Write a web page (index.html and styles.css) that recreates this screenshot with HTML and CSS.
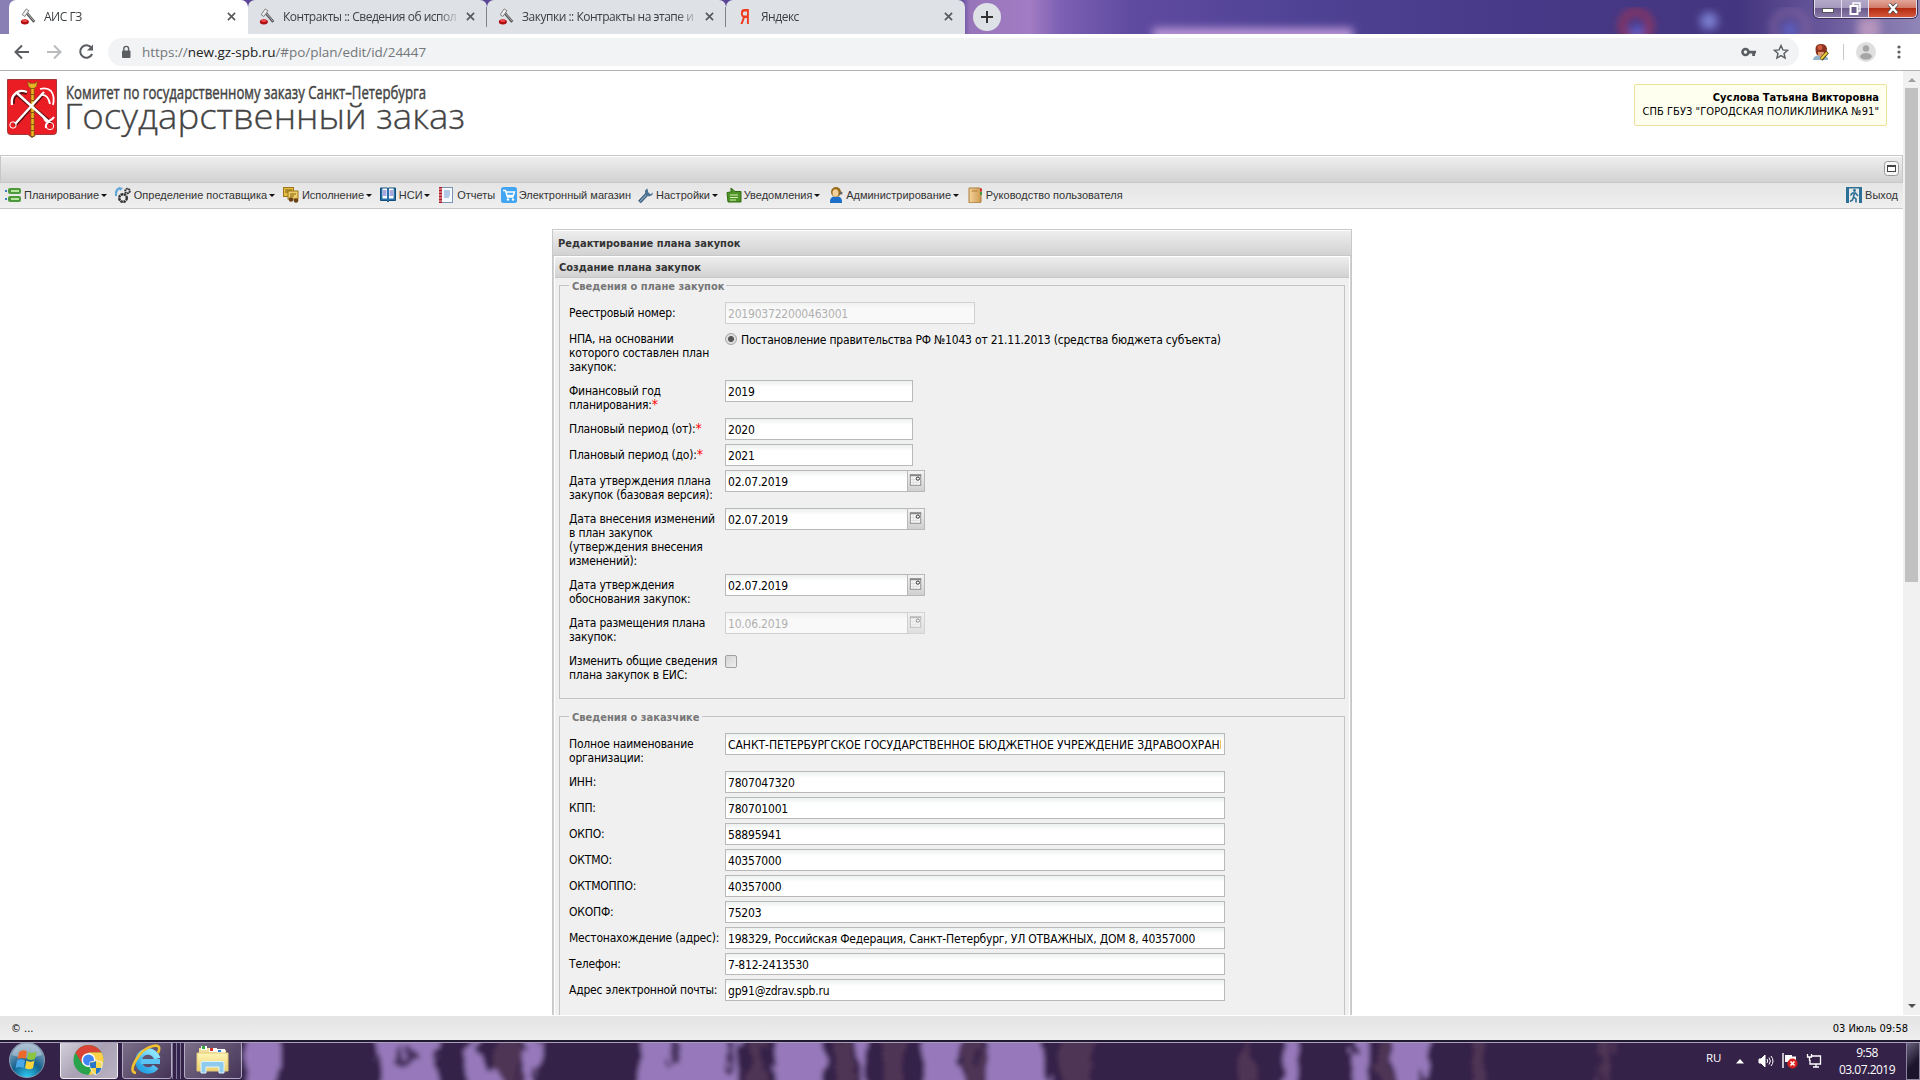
FILE: index.html
```html
<!DOCTYPE html>
<html lang="ru">
<head>
  <meta charset="utf-8">
  <title>АИС ГЗ</title>
  <link rel="stylesheet" href="styles.css">
</head>
<body>
  <svg width="0" height="0" class="defs">
    <defs>
      <linearGradient id="gDoc" x1="0" y1="0" x2="1" y2="0"><stop offset="0" stop-color="#f5d39a"/><stop offset="1" stop-color="#cf9a52"/></linearGradient>
      <radialGradient id="gOrb" cx=".5" cy="1" r=".9"><stop offset="0" stop-color="#2fd0f5"/><stop offset=".5" stop-color="#12618f"/><stop offset="1" stop-color="#8aa6bd"/></radialGradient>
      <linearGradient id="gFolder" x1="0" y1="0" x2="0" y2="1"><stop offset="0" stop-color="#fff6b8"/><stop offset="1" stop-color="#ecd06a"/></linearGradient>
      <linearGradient id="gIe" x1="0" y1="0" x2="0" y2="1"><stop offset="0" stop-color="#8be4ff"/><stop offset="1" stop-color="#27a5e6"/></linearGradient>
      <filter id="soft"><feGaussianBlur stdDeviation="4"/></filter>
      <filter id="bark">
        <feTurbulence type="fractalNoise" baseFrequency=".08 .03" numOctaves="3" seed="4" result="n"/>
        <feDisplacementMap in="SourceGraphic" in2="n" scale="26" xChannelSelector="R" yChannelSelector="G"/>
        <feGaussianBlur stdDeviation="2.800"/>
      </filter>
      <symbol id="hammer" viewBox="0 0 16 19">
        <path d="M6 5l9 10.500" stroke="#555" stroke-width="3"/>
        <path d="M6.500 5l8 9.500" stroke="#bbb" stroke-width="1"/>
        <path d="M1.500 7.500L6 1l3 2-4.500 6.500z" fill="#eee" stroke="#777"/>
        <ellipse cx="4.500" cy="15.500" rx="4.500" ry="3" fill="#b00f14"/>
        <ellipse cx="4.500" cy="14.200" rx="3" ry="1.400" fill="#f04a4a"/>
      </symbol>
      <symbol id="cal" viewBox="0 0 17 20">
        <rect x="2.500" y="3.500" width="11" height="11" fill="#fbfbfb" stroke="#888"/>
        <path d="M2 4h12" stroke="#888" stroke-width="2"/>
        <path d="M5.500 6v8M8.500 6v8M3 8.500h10M3 11.500h10" stroke="#ddd"/>
        <circle cx="10.500" cy="7.500" r="1.700" fill="#fff" stroke="#222"/>
      </symbol>
    </defs>
  </svg>

  <!-- browser tabs -->
  <div class="tabstrip">
    <svg class="glass" width="1920" height="34">
      <g filter="url(#soft)">
        <rect x="1153" y="28" width="200" height="14" fill="#b894d6"/>
        <circle cx="1636" cy="26" r="14" fill="none" stroke="#93345f" stroke-width="7"/>
        <circle cx="1637" cy="32" r="7" fill="#5a5cc4"/>
        <circle cx="1709" cy="21" r="9" fill="#7a7ed0"/>
        <circle cx="1790" cy="28" r="17" fill="none" stroke="#8a68a6" stroke-width="4"/>
        <circle cx="1790" cy="30" r="8" fill="#5d5fc0"/>
        <rect x="1858" y="18" width="22" height="22" fill="#b695bd"/>
      </g>
    </svg>
    <div class="tab active">
      <svg class="fav"><use href="#hammer"/></svg><span class="tab-title">АИС ГЗ</span>
      <svg class="tab-x" viewBox="0 0 10 10"><path d="M1 1l8 8M9 1L1 9"/></svg>
    </div>
    <div class="tab">
      <svg class="fav"><use href="#hammer"/></svg><span class="tab-title">Контракты :: Сведения об испол</span>
      <svg class="tab-x" viewBox="0 0 10 10"><path d="M1 1l8 8M9 1L1 9"/></svg>
    </div>
    <div class="tab sep">
      <svg class="fav"><use href="#hammer"/></svg><span class="tab-title">Закупки :: Контракты на этапе и</span>
      <svg class="tab-x" viewBox="0 0 10 10"><path d="M1 1l8 8M9 1L1 9"/></svg>
    </div>
    <div class="tab sep last">
      <span class="fav ya">Я</span><span class="tab-title">Яндекс</span>
      <svg class="tab-x" viewBox="0 0 10 10"><path d="M1 1l8 8M9 1L1 9"/></svg>
    </div>
    <svg class="newtab" width="28" height="28"><circle cx="14" cy="14" r="14" fill="#dee1e6"/><path d="M14 8v12M8 14h12" stroke="#333" stroke-width="2"/></svg>
    <div class="winbtns">
      <span class="wb"><svg width="12" height="12"><rect x=".5" y="5.500" width="11" height="4" fill="#fff" stroke="#555"/></svg></span>
      <span class="wb"><svg width="12" height="14"><rect x="4" y="1" width="7" height="8" fill="none" stroke="#fff" stroke-width="1.500"/><rect x="1.500" y="4" width="7" height="8" fill="#6b5a8c" stroke="#fff" stroke-width="2"/></svg></span>
      <span class="wb wclose"><svg width="12" height="12"><path d="M2 1l8 9M10 1l-8 9" stroke="#444" stroke-width="4"/><path d="M2 1l8 9M10 1l-8 9" stroke="#fff" stroke-width="2.500"/></svg></span>
    </div>
  </div>

  <!-- address bar -->
  <div class="toolbar">
    <svg class="nav" width="100" height="36" fill="none" stroke-width="2">
      <path d="M21 18H8M14 11.500L7.500 18l6.500 6.500" stroke="#5a5d61"/>
      <path d="M39 18h13M46 11.500l6.500 6.500-6.500 6.500" stroke="#b9bbbd"/>
      <path d="M83.500 14a6.200 6.200 0 1 0 .6 6" stroke="#5a5d61"/><path d="M85 10.500v6h-6z" fill="#5a5d61"/>
    </svg>
    <div class="omnibox">
      <svg width="10" height="14"><rect x="1" y="5.500" width="8.500" height="7.500" rx="1" fill="#5a5d61"/><path d="M2.800 6V3.800a2.400 2.400 0 0 1 4.800 0V6" fill="none" stroke="#5a5d61" stroke-width="1.400"/></svg>
      <span class="url"><i>https://</i>new.gz-spb.ru<i>/#po/plan/edit/id/24447</i></span>
      <svg class="key" width="16" height="10"><circle cx="4.500" cy="5" r="3" fill="none" stroke="#5a5d61" stroke-width="2.600"/><path d="M8 3.800h7v2.600h-1v2.600h-2.800V6.400H8z" fill="#5a5d61"/></svg>
      <svg class="star" width="16" height="16"><path d="M8 1.500l1.900 4.400 4.700.4-3.600 3.100 1.100 4.700L8 11.600l-4.100 2.500L5 9.400 1.400 6.300l4.700-.4z" fill="none" stroke="#5a5d61" stroke-width="1.400"/></svg>
    </div>
    <svg class="ext" width="16" height="17"><path d="M0 16l1-3 4-2h6l4 3v2z" fill="#93b2cc"/><path d="M2.500 5q0-5 5.500-5t6 5q0 4-2 6H4Q2.500 9 2.500 5z" fill="#8b3222"/><circle cx="7" cy="3.500" r="2.500" fill="#cf5b3c"/><path d="M5 8h6v3l-3 2-3-2z" fill="#e09a6c"/><path d="M14.500 8L8 15.500" stroke="#4b3b10" stroke-width="3.600"/><path d="M14 8.500L8 15" stroke="#f3d13d" stroke-width="2"/></svg>
    <span class="vline"></span>
    <svg class="avatar" width="20" height="20"><circle cx="10" cy="10" r="10" fill="#dfdfdf"/><circle cx="10" cy="6.500" r="3.200" fill="#a6a6a6"/><ellipse cx="10" cy="14.300" rx="5.800" ry="3.300" fill="#a6a6a6"/></svg>
    <svg class="dots" width="4" height="16" fill="#5a5d61"><circle cx="2" cy="3" r="1.600"/><circle cx="2" cy="8" r="1.600"/><circle cx="2" cy="13" r="1.600"/></svg>
  </div>

  <div class="viewport">
    <div class="page">
      <header class="head">
        <svg class="logo" width="480" height="66">
          <path d="M0.500 .5h49v52q0 3-3 3H29l-4 3-4-3H3.500q-3 0-3-3z" fill="#ea1c24" stroke="#9c3a3a"/>
          <g fill="none" stroke="#5c0d10" stroke-width="4">
            <path d="M8 46L37 14M6 25q-1-6 3-9 4-5 11-2M44 44L10 15"/>
          </g>
          <path d="M25.500 5v53" stroke="#7a5a12" stroke-width="4"/>
          <path d="M25.500 4v53" stroke="#f3b61f" stroke-width="2.400" stroke-dasharray="5 1"/>
          <path d="M20.500 2.500l3 2h4l3-2-1 5-2.500 2h-3l-2.500-2z" fill="#e6b322" stroke="#6b4a10" stroke-width=".6"/>
          <g fill="none" stroke="#fff" stroke-width="2.400">
            <path d="M8 45L37 13M42 43L10 14"/>
            <path d="M5 26q-1-8 3-11 4-5 12-2"/>
            <path d="M33 10q7-2 11 2 4 5 2 14M34 16q7-1 9 9" stroke-width="1.800"/>
            <circle cx="6" cy="46" r="3.200" stroke-width="1"/>
            <path d="M37 38q1 6 5 4t5-4M42 42q-4 3-3 7" stroke-width="2"/>
            <circle cx="43" cy="47" r="3.700" stroke-width="1"/>
          </g>
          <text class="logo-small" x="59" y="20" textLength="360" lengthAdjust="spacingAndGlyphs">Комитет по государственному заказу Санкт–Петербурга</text>
          <text class="logo-big" x="57" y="50" textLength="401" lengthAdjust="spacingAndGlyphs">Государственный заказ</text>
        </svg>
        <div class="user">
          <b>Суслова Татьяна Викторовна</b>
          <span>СПБ ГБУЗ "ГОРОДСКАЯ ПОЛИКЛИНИКА №91"</span>
        </div>
      </header>

      <div class="collapse-bar"><svg width="15" height="15"><rect x=".5" y=".5" width="14" height="14" rx="3" fill="#f6f6f6" stroke="#999"/><rect x="3.500" y="4.500" width="8" height="6" fill="#fff" stroke="#444"/><path d="M3 5h9" stroke="#444" stroke-width="2"/></svg></div>

      <nav class="menu">
        <a class="arr"><svg viewBox="0 0 16 16"><path d="M0 3h2v2H0zM0 11h2v2H0z" fill="#3a7fc0"/><rect x="3" y="1" width="13" height="6" rx="2" fill="#4c9a3c"/><rect x="3" y="9" width="13" height="6" rx="2" fill="#4c9a3c"/><path d="M6 4h8M6 12h8" stroke="#b6e69e" stroke-width="2"/></svg><span>Планирование</span></a>
        <a class="arr"><svg viewBox="0 0 16 16" fill="none"><path d="M1 9q-1-6 4-8" stroke="#5fa7d6" stroke-width="2.400"/><path d="M4 0l4 1-3 3z" fill="#5fa7d6"/><circle cx="8" cy="11" r="3.800" stroke="#333" stroke-width="2.400" stroke-dasharray="2.500 .5"/><circle cx="12.500" cy="4" r="2.300" stroke="#333" stroke-width="2" stroke-dasharray="1.600 .5"/></svg><span>Определение поставщика</span></a>
        <a class="arr"><svg viewBox="0 0 16 16"><rect x="0.500" y="0.500" width="10" height="9" fill="#e5bd45" stroke="#9b7717"/><rect x="5" y="4" width="10" height="8" fill="#efcf68" stroke="#9b7717"/><path d="M2 3h7M2 5h3M7 7h6M7 9h4" stroke="#806010"/><circle cx="8" cy="12.500" r="2.300" fill="#6b4317"/><circle cx="13" cy="13.500" r="2.300" fill="#6b4317"/></svg><span>Исполнение</span></a>
        <a class="arr"><svg viewBox="0 0 16 16"><path d="M.5 1h7l.5 1 .5-1h7v12.500H9l-1 1.500-1-1.500H.5z" fill="#2a70a8" stroke="#124a78"/><rect x="2.500" y="1.500" width="4.500" height="10" fill="#fff"/><rect x="9" y="1.500" width="4.500" height="10" fill="#fff"/><path d="M3 4h3.500M3 6h3.500M3 8h3.500M9.500 4H13M9.500 6H13M9.500 8H13" stroke="#5b4fc0"/></svg><span>НСИ</span></a>
        <a><svg viewBox="0 0 16 16"><rect x="3" y=".5" width="11.500" height="15" fill="#f6faff" stroke="#7a93b5"/><path d="M6 4h6M6 6h6M6 8h6M6 10h5" stroke="#6d9ad0"/><rect x="1" y="0" width="3" height="16" fill="#b31e2b"/><path d="M0 2h4M0 5h4M0 8h4M0 11h4M0 14h4" stroke="#fff" stroke-width=".7"/></svg><span>Отчеты</span></a>
        <a class="shop"><svg viewBox="0 0 16 16"><rect width="16" height="16" rx="2.500" fill="#41a5f2"/><path d="M2 3.500h2.500l2 6.500h6M5 5h8.500l-1.200 3.500H6" fill="none" stroke="#fff" stroke-width="1.500"/><circle cx="7" cy="12.500" r="1.200" fill="#fff"/><circle cx="12" cy="12.500" r="1.200" fill="#fff"/></svg><span>Электронный магазин</span></a>
        <a class="arr tight"><svg viewBox="0 0 16 16"><path d="M1.500 15L10 6" stroke="#2e4f6c" stroke-width="3.600"/><path d="M2 14.500L10 6" stroke="#7fa0bd" stroke-width="1.800"/><path d="M9.500 1.500A4 4 0 1 0 15 5.500l-2.500 1.700-2.300-1.900z" fill="#4d7291"/></svg><span>Настройки</span></a>
        <a class="arr tight"><svg viewBox="0 0 16 16"><path d="M1 5.500L5 5V1l4 3.500h6V15H2z" fill="#4f9427" stroke="#326b12"/><path d="M4 8h8M4 10.500h8M4 13h6" stroke="#d8f0b8"/></svg><span>Уведомления</span></a>
        <a class="arr tight"><svg viewBox="0 0 16 16"><path d="M2 16q-.5-6 4-6.500h4q4.500.5 4 6.500z" fill="#1e6fc9"/><circle cx="8" cy="5" r="5" fill="#9b6a1a"/><ellipse cx="7.500" cy="6" rx="3" ry="3.800" fill="#f2cf9b"/><circle cx="13" cy="6" r="1.500" fill="#666"/></svg><span>Администрирование</span></a>
        <a class="tight guide"><svg viewBox="0 0 16 16"><path d="M1 1h11l1 1v13l-1 .8H1z" fill="url(#gDoc)" stroke="#a97c3d"/><path d="M3.500 3.500h6v1h-6z" fill="#b27d34"/><path d="M12 1.500h2v3h-2z" fill="#c33"/><path d="M12 5h2v3h-2z" fill="#4a9a3a"/></svg><span>Руководство пользователя</span></a>
        <a class="exit"><svg viewBox="0 0 16 16"><path d="M0 0h16v16h-3V1.500H3V16H0z" fill="#2c7096"/><circle cx="8.500" cy="3.500" r="1.400" fill="#2c7096"/><path d="M4.500 8.500l2-2.500h3l2.500 3M8.500 6L7.500 10l2.500 2v3.500M7.500 10l-1 3-2.500 1.500" fill="none" stroke="#2c7096" stroke-width="1.600"/></svg><span>Выход</span></a>
      </nav>

      <main>
        <div class="panel">
          <div class="panel-head">Редактирование плана закупок</div>
          <div class="inner">
            <div class="inner-head">Создание плана закупок</div>
            <form>
              <fieldset>
                <legend>Сведения о плане закупок</legend>
                <div class="row"><label>Реестровый номер:</label><input class="w250" value="201903722000463001" disabled></div>
                <div class="row"><label>НПА, на основании<br>которого составлен план<br>закупок:</label><span class="radio"></span><span class="radio-text">Постановление правительства РФ №1043 от 21.11.2013 (средства бюджета субъекта)</span></div>
                <div class="row"><label>Финансовый год<br>планирования:<em>*</em></label><input class="w188" value="2019"></div>
                <div class="row"><label>Плановый период (от):<em>*</em></label><input class="w188" value="2020"></div>
                <div class="row"><label>Плановый период (до):<em>*</em></label><input class="w188" value="2021"></div>
                <div class="row"><label>Дата утверждения плана<br>закупок (базовая версия):</label><input class="date" value="02.07.2019"><svg class="trigger"><use href="#cal"/></svg></div>
                <div class="row"><label>Дата внесения изменений<br>в план закупок<br>(утверждения внесения<br>изменений):</label><input class="date" value="02.07.2019"><svg class="trigger"><use href="#cal"/></svg></div>
                <div class="row"><label>Дата утверждения<br>обоснования закупок:</label><input class="date" value="02.07.2019"><svg class="trigger"><use href="#cal"/></svg></div>
                <div class="row"><label>Дата размещения плана<br>закупок:</label><input class="date" value="10.06.2019" disabled><svg class="trigger off"><use href="#cal"/></svg></div>
                <div class="row"><label>Изменить общие сведения<br>плана закупок в ЕИС:</label><span class="check"></span></div>
              </fieldset>
              <fieldset>
                <legend>Сведения о заказчике</legend>
                <div class="row"><label>Полное наименование<br>организации:</label><input class="w500 caps" value="САНКТ-ПЕТЕРБУРГСКОЕ ГОСУДАРСТВЕННОЕ БЮДЖЕТНОЕ УЧРЕЖДЕНИЕ ЗДРАВООХРАНЕНИЯ"></div>
                <div class="row"><label>ИНН:</label><input class="w500" value="7807047320"></div>
                <div class="row"><label>КПП:</label><input class="w500" value="780701001"></div>
                <div class="row"><label>ОКПО:</label><input class="w500" value="58895941"></div>
                <div class="row"><label>ОКТМО:</label><input class="w500" value="40357000"></div>
                <div class="row"><label>ОКТМОППО:</label><input class="w500" value="40357000"></div>
                <div class="row"><label>ОКОПФ:</label><input class="w500" value="75203"></div>
                <div class="row"><label>Местонахождение (адрес):</label><input class="w500" value="198329, Российская Федерация, Санкт-Петербург, УЛ ОТВАЖНЫХ, ДОМ 8, 40357000"></div>
                <div class="row"><label>Телефон:</label><input class="w500" value="7-812-2413530"></div>
                <div class="row"><label>Адрес электронной почты:</label><input class="w500" value="gp91@zdrav.spb.ru"></div>
              </fieldset>
            </form>
          </div>
        </div>
      </main>
    </div>
    <div class="scroll"><i class="up"></i><i class="thumb"></i><i class="down"></i></div>
  </div>

  <footer class="status"><span>© ...</span><span class="stamp">03 Июль 09:58</span></footer>

  <!-- windows taskbar -->
  <div class="taskbar">
    <svg class="trees" width="1920" height="40">
      <rect width="1920" height="40" fill="#35234a"/>
      <g filter="url(#bark)">
        <rect x="-10" y="-10" width="1940" height="60" fill="#35234a"/>
        <g fill="#9779bb">
          <path d="M246-20h32v80h-32zM378-20h60v80h-60zM470-20h10v45l20 10v25h-30zM524-20h12v80h-12zM640-20h98v80h-98zM775-20h46v80h-46zM860-20h8v80h-8zM925-20h38v80h-38zM985-20h56l10 80h-66zM1284-20h12v80h-12zM1354-20h14v80h-14zM1394-20h32v80h-32z"/>
        </g>
        <g fill="#573a58">
          <path d="M500-10h20v70h-20zM748-10h18v70h-18zM835-10h20v70h-20zM880-10h26v70h-26zM968-10h12v70h-12zM1060-10h34v70h-34zM1376-10h14v70h-14zM1472-10h12v70h-12zM1600-10h10v70h-10zM1240-10h12v70h-12z" opacity=".8"/>
        </g>
        <path d="M404 2l12 20h-20zM670-10h10v35h-10zM725-10h8v40h-8z" fill="#46305f"/>
      </g>
    </svg>
    <svg class="orb" width="40" height="40"><circle cx="20" cy="20" r="17.500" fill="url(#gOrb)" stroke="#8c9cb0"/><path d="M5 15a15.500 15.500 0 0 1 30 0q-15 6-30 0z" fill="#c9d6e2" opacity=".5"/><path d="M12 12q4-3 8-.5L18.500 19q-4-2-8 0z" fill="#ee6a2c"/><path d="M21.500 12q4 2 8-.5L28 19q-4 2-8 0z" fill="#8cc63f"/><path d="M10 20.500q4-2.500 8 0L16.500 28q-4-2-8 0z" fill="#4aa7e8"/><path d="M19.500 20.500q4 2.500 8 0L26 28q-4 2.500-8 0z" fill="#fbd23a"/></svg>
    <span class="task on"><svg width="32" height="32"><circle cx="15.500" cy="16" r="15" fill="#2ba24c"/><path d="M2.500 8.500A15 15 0 0 1 28.500 8.500H15.500L9 19.500z" fill="#da4437"/><path d="M28.500 8.500a15 15 0 0 1-13 22.500l6.500-11.500-6.500-11z" fill="#fdd04a"/><circle cx="15.500" cy="16" r="7" fill="#fff"/><circle cx="15.500" cy="16" r="5.500" fill="#4285f4"/><path d="M17 18q4 0 6-2 2 2 6 2 1 9-6 13-7-4-6-13z" fill="#f8d94a" stroke="#eee"/><path d="M23 17v7h-5.500q-.6-2.500-.5-5.500 4 0 6-1.500zM23 24h5.500q-1 4-5.500 6.500z" fill="#2874c8"/></svg></span>
    <span class="task ie"><svg width="32" height="32"><circle cx="17" cy="17" r="9.500" fill="none" stroke="url(#gIe)" stroke-width="6.500" stroke-dasharray="51 8.700" transform="rotate(36 17 17)"/><path d="M10 17.500h19" stroke="#5cc4f2" stroke-width="5"/><path d="M5 29Q-2 28 5 16T22 2q9-2 5 7" fill="none" stroke="#f2c12e" stroke-width="2.600"/></svg></span>
    <span class="stack"></span>
    <span class="task files"><svg width="34" height="30"><path d="M3 3h11l2 2h14v20H3z" fill="#f3e19a"/><path d="M5 1h6v4H5z" fill="#fff"/><path d="M6 1h3v3H6z" fill="#2fae3a"/><path d="M13 3h8v4h-8z" fill="#fff"/><path d="M14 3h3v3h-3z" fill="#d93025"/><path d="M21 4h8v4h-8z" fill="#fff"/><path d="M22 5h3v2h-3z" fill="#2b7de0"/><path d="M1 8h31v18H1z" fill="url(#gFolder)" stroke="#e3c978"/><path d="M5 28V18q0-1.500 2-1.500h19q2 0 2 1.500v10h-5v-6H10v6z" fill="#8ecbed" stroke="#dff3ff"/></svg></span>
    <div class="tray">
      <span class="lang">RU</span>
      <svg class="t-up" width="8" height="5"><path d="M0 4.500L4 0l4 4.500z" fill="#fff"/></svg>
      <svg class="t-vol" width="16" height="14" fill="none" stroke="#fff"><path d="M1 5h2l4-4v12L3 9H1z" fill="#fff"/><path d="M9 5q1.500 2 0 4M11 3.500q2.800 3.500 0 7M13 2q4 5 0 10"/></svg>
      <svg class="t-flag" width="16" height="16"><path d="M1 0v15" stroke="#fff" stroke-width="1.400"/><path d="M3 2h7v1.500h4V9H3z" fill="#fff"/><circle cx="10.500" cy="10.500" r="5" fill="#d8221f"/><path d="M8.500 8.500l4 4M12.500 8.500l-4 4" stroke="#fff" stroke-width="1.600"/></svg>
      <svg class="t-net" width="16" height="16" fill="none" stroke="#fff" stroke-width="1.300"><path d="M6 3h8.500v8H4V7M7 14h6M10 11v3"/><path d="M1.500 1v3h4V1M3.500 4v4" /></svg>
      <div class="clock">9:58<br>03.07.2019</div>
      <span class="peek"></span>
    </div>
  </div>
</body>
</html>
```

FILE: styles.css
```css
* {
  box-sizing: border-box;
}

body {
  margin: 0;
  width: 1920px;
  height: 1080px;
  overflow: hidden;
  background: #fff;
  font-family: "DejaVu Sans Condensed", "DejaVu Sans", sans-serif;
  font-size: 11px;
  color: #000;
  display: flex;
  flex-direction: column;
}

.defs {
  position: absolute;
}

/* tabs */
.tabstrip {
  position: relative;
  flex: none;
  height: 34px;
  padding-left: 9px;
  display: flex;
  background: linear-gradient(to right, #8a7fb4 0, #8a7fb4 10px, #5a4596 30px, #5a4596 960px, #9875ba 970px, #a27cc4 1030px, #7d60b3 1060px, #5f4ba0 1130px, #4f4294 1300px, #483a88 1500px, #43357f 1740px, #6a5a9c 1830px, #9086b6 1920px);
}

.glass {
  position: absolute;
  left: 0;
  top: 0;
}

.tab {
  position: relative;
  width: 239px;
  height: 34px;
  display: flex;
  align-items: center;
  padding: 0 11px 1px 11px;
  background: #dee1e6;
  border-radius: 7px 7px 0 0;
  font-family: "Open Sans", "Noto Sans", sans-serif;
  font-size: 12px;
  color: #3c4043;
}

.tab.active {
  background: #fff;
  z-index: 1;
}

.tab.sep::before {
  content: "";
  position: absolute;
  left: -1px;
  top: 7px;
  width: 1px;
  height: 20px;
  background: #808388;
}

.fav {
  flex: none;
  width: 16px;
  height: 17px;
}

.ya {
  font-family: "Liberation Sans", sans-serif;
  font-size: 22px;
  line-height: 17px;
  font-weight: bold;
  color: #f03c1e;
  transform: scaleX(0.6);
}

.tab-title {
  flex: 1;
  margin-left: 8px;
  white-space: nowrap;
  overflow: hidden;
  letter-spacing: -0.48px;
  -webkit-mask-image: linear-gradient(to right, #000 155px, transparent 178px);
  mask-image: linear-gradient(to right, #000 155px, transparent 178px);
}

.tab-x {
  flex: none;
  width: 9px;
  height: 9px;
  margin: 0 1px 0 8px;
  stroke: #55585c;
  stroke-width: 1.8;
}

.newtab {
  position: relative;
  margin: 3px 0 0 8px;
}

.winbtns {
  position: relative;
  display: flex;
  width: 103px;
  height: 18px;
  margin-left: auto;
  margin-right: 3px;
  border: 1px solid #e3ddec;
  border-top: none;
  border-radius: 0 0 5px 5px;
  box-shadow: 0 0 0 1px #3a2f55;
  overflow: hidden;
}

.wb {
  width: 27px;
  display: flex;
  align-items: center;
  justify-content: center;
  border-right: 1px solid #e3ddec;
  background: linear-gradient(#b3a9c8 0, #a59abe 45%, #6b5a8c 50%, #8878a6 100%);
}

.wclose {
  flex: 1;
  border: none;
  background: linear-gradient(#e2a69a 0, #d37b68 45%, #b32c12 50%, #d5573b 100%);
}

/* address bar */
.toolbar {
  flex: none;
  height: 37px;
  display: flex;
  align-items: center;
  border-bottom: 1px solid #b3b3b3;
  background: #fff;
}

.nav {
  margin-left: 8px;
}

.omnibox {
  width: 1691px;
  height: 28px;
  border-radius: 14px;
  background: #f1f3f4;
  display: flex;
  align-items: center;
  padding: 0 10px 0 13px;
}

.url {
  flex: 1;
  margin-left: 11px;
  font-family: "Open Sans", "Noto Sans", sans-serif;
  font-size: 13.5px;
  letter-spacing: -0.04px;
  color: #222;
}

.url i {
  font-style: normal;
  color: #74777b;
}

.star {
  margin-left: 16px;
}

.ext {
  margin-left: 14px;
}

.vline {
  width: 1px;
  height: 16px;
  margin-left: 14px;
  background: #c8c8c8;
}

.avatar {
  margin-left: 12px;
}

.dots {
  margin-left: 21px;
}

/* page */
.viewport {
  height: 944px;
  display: flex;
}

.page {
  width: 1903px;
  height: 944px;
  overflow: hidden;
  display: flex;
  flex-direction: column;
}

.head {
  flex: none;
  height: 84px;
  display: flex;
  justify-content: space-between;
  align-items: flex-start;
}

.logo {
  margin: 8px 0 0 7px;
  overflow: visible;
}

.logo-small {
  font-family: "Open Sans", "Noto Sans", sans-serif;
  font-size: 17.5px;
  fill: #444;
  stroke: #444;
  stroke-width: 0.45;
}

.logo-big {
  font-family: "Open Sans", "Noto Sans", sans-serif;
  font-weight: 300;
  font-size: 34px;
  fill: #444;
  stroke: #444;
  stroke-width: 0.3;
}

.user {
  width: 253px;
  height: 42px;
  margin: 13px 16px 0 0;
  padding: 6px 7px 0 0;
  display: flex;
  flex-direction: column;
  align-items: flex-end;
  white-space: nowrap;
  font-size: 11px;
  line-height: 14px;
  background: #fffff0;
  border: 1px solid #eee29a;
  border-radius: 2px;
}

.user span {
  letter-spacing: 0.06px;
}

.collapse-bar {
  flex: none;
  height: 28px;
  display: flex;
  align-items: center;
  justify-content: flex-end;
  padding: 0 3px 1px 0;
  border: 1px solid #c8c8c8;
  box-shadow: inset 0 1px 0 #fff;
  background: linear-gradient(#efefef, #d2d2d2);
}

.menu {
  flex: none;
  height: 26px;
  padding: 0 5px 1px 5px;
  display: flex;
  align-items: center;
  border-bottom: 1px solid #c8c8c8;
  background: linear-gradient(#e5e5e5, #efefef);
  font-family: "Liberation Sans", Arial, sans-serif;
  font-size: 11px;
  color: #333;
}

.menu a {
  display: flex;
  align-items: center;
  margin-right: 8px;
  white-space: nowrap;
}

.menu svg {
  width: 16px;
  height: 16px;
  margin-right: 3px;
}

.menu .shop {
  margin-left: -2px;
  margin-right: 7px;
}

.menu .shop svg {
  margin-right: 1.5px;
}

.menu .tight svg {
  margin-right: 2px;
}

.menu .guide {
  margin-left: 1px;
}

.menu .arr::after {
  content: "";
  margin-left: 1.7px;
  border: 3px solid transparent;
  border-top-color: #111;
  border-bottom: none;
}

.menu .exit {
  margin: 0 0 0 auto;
}

main {
  flex: 1;
  padding: 20px 0 0 552px;
  overflow: hidden;
}

.panel {
  width: 800px;
  height: 900px;
  border: 1px solid #c8c8c8;
  background: #f0f0f0;
}

.panel-head,
.inner-head {
  font-weight: bold;
  color: #333;
  box-shadow: inset 0 1px 0 #fff;
  background: linear-gradient(#efefef, #d2d2d2);
  border-bottom: 1px solid #c8c8c8;
}

.panel-head {
  height: 26px;
  line-height: 27px;
  padding-left: 5px;
}

.inner {
  margin: 0 1px;
  height: 880px;
  border: 1px solid #fff;
  border-top: none;
  box-shadow: -1px 0 0 #d0d0d0, 1px 0 0 #d0d0d0;
}

.inner-head {
  height: 22px;
  line-height: 24px;
  padding-left: 4px;
}

fieldset {
  width: 786px;
  margin: 0 0 10px 4px;
  padding: 10px 0 10px 9px;
  border: 1px solid #c4c4c4;
}

legend {
  height: 14px;
  line-height: 17px;
  margin-left: 0;
  padding: 0 2px 0 3px;
  font-weight: bold;
  color: #777;
}

.row {
  display: flex;
  align-items: flex-start;
  min-height: 26px;
  font-size: 12px;
  letter-spacing: -0.2px;
}

label {
  width: 156px;
  padding: 4px 0 6px;
  line-height: 14px;
  white-space: nowrap;
}

label em {
  font-style: normal;
  font-size: 14px;
  line-height: 10px;
  color: #f00;
}

.row input {
  height: 22px;
  margin: 0;
  padding: 1px 3px 0 2px;
  border: 1px solid #b9b9b9;
  background: linear-gradient(#edf0f0, #fff 6px);
  font: inherit;
  letter-spacing: inherit;
  color: #000;
}

.row input.caps {
  letter-spacing: -0.05px;
}

.row input:disabled {
  color: #b0b0b0;
  border-color: #d0d0d0;
  background: linear-gradient(#f0f1f1, #f9f9f9 6px);
}

.w250 { width: 250px; }
.w188 { width: 188px; }
.w500 { width: 500px; }
.date { width: 183px; }

.trigger {
  width: 17px;
  height: 22px;
  border: 1px solid #b9b9b9;
  border-left: none;
  background: linear-gradient(#f3f3f3, #cfcfcf);
}

.trigger.off {
  opacity: 0.5;
}

.radio {
  width: 12px;
  height: 12px;
  margin-top: 5px;
  border: 1px solid #a5a5a5;
  border-radius: 50%;
  background: radial-gradient(circle, #555 0, #555 2.5px, #ddd 3.5px);
}

.radio-text {
  margin-left: 4px;
  line-height: 24px;
  white-space: nowrap;
}

.check {
  width: 12px;
  height: 13px;
  margin-top: 5px;
  border: 1px solid #a0a0a0;
  border-radius: 2px;
  background: linear-gradient(135deg, #d4d4d4, #efefef);
}

.scroll {
  width: 17px;
  height: 944px;
  background: #f1f1f1;
  display: flex;
  flex-direction: column;
  align-items: center;
}

.up {
  margin-top: 7px;
  border: 4px solid transparent;
  border-top: none;
  border-bottom-color: #a0a0a0;
}

.thumb {
  width: 13px;
  height: 494px;
  margin-top: 6px;
  background: #c1c1c1;
}

.down {
  margin-top: auto;
  margin-bottom: 7px;
  border: 4px solid transparent;
  border-bottom: none;
  border-top-color: #505050;
}

.status {
  height: 25px;
  padding: 0 12px 0 11px;
  display: flex;
  align-items: center;
  justify-content: space-between;
  border-top: 1px solid #fff;
  background: linear-gradient(#e4e4e4, #eee);
}

/* taskbar */
.taskbar {
  position: relative;
  flex: none;
  height: 40px;
  display: flex;
  align-items: stretch;
  background: #35234a;
}

.trees {
  position: absolute;
  left: 0;
  top: 0;
}

.taskbar::after {
  content: "";
  position: absolute;
  left: 0;
  top: 0;
  width: 1920px;
  height: 2px;
  background: #211a30;
  border-bottom: 1px solid #a99fbc;
}

.orb,
.task,
.stack,
.tray {
  position: relative;
}

.orb {
  margin-left: 7px;
}

.task {
  width: 58px;
  margin: 1px 0 1px 13px;
  border: 1px solid #b3abc4;
  border-radius: 3px;
  background: linear-gradient(135deg, rgba(255, 255, 255, 0.35), rgba(255, 255, 255, 0.08));
  display: flex;
  align-items: center;
  justify-content: center;
}

.task.on {
  border-color: #eee;
  background: linear-gradient(135deg, #d3cfdb 0, #a9a1b4 50%, #b9b3c3 100%);
}

.task.ie {
  width: 50px;
  margin-left: 4px;
}

.stack {
  width: 9px;
  margin: 1px 0;
  border: solid #837a99;
  border-width: 0 1px;
  box-shadow: inset -3px 0 0 #35234f, inset -4px 0 0 #837a99;
}

.task.files {
  margin-left: 3px;
}

.tray {
  margin-left: auto;
  display: flex;
  align-items: center;
  color: #fff;
  font-family: "Open Sans", "Noto Sans", sans-serif;
  font-size: 12px;
}

.lang {
  width: 16px;
  font-size: 11.5px;
  margin: 0 14px 5px 0;
}

.t-up {
  margin-top: 2px;
}

.t-vol {
  margin: 2px 0 0 14px;
}

.t-flag {
  margin: 2px 0 0 8px;
}

.t-net {
  margin: 2px 0 0 8px;
}

.clock {
  width: 70px;
  margin-left: 10px;
  padding-top: 2px;
  text-align: center;
  line-height: 17px;
  letter-spacing: -0.5px;
}

.peek {
  align-self: stretch;
  width: 14px;
  margin: 1px 0 0 4px;
  border: 1px solid #8d86a0;
  background: linear-gradient(135deg, #6c6580, #1c142c 60%);
}
```
